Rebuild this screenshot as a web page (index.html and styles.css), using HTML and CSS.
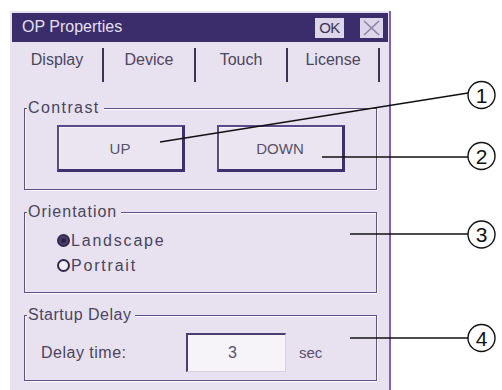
FILE: index.html
```html
<!DOCTYPE html>
<html>
<head>
<meta charset="utf-8">
<link rel="stylesheet" href="styles.css">
</head>
<body>
<div class="stage">
  <div class="window">
    <div class="titlebar">
      <span class="title">OP Properties</span>
      <span class="tb-ok">OK</span>
      <span class="tb-close"><svg width="19" height="16" viewBox="0 0 19 16"><path d="M2 1 L17 15 M17 1 L2 15" stroke="#8a84a0" stroke-width="1.6" fill="none"/></svg></span>
    </div>
    <div class="tabs">
      <div class="tab">Display</div>
      <div class="tab">Device</div>
      <div class="tab">Touch</div>
      <div class="tab">License</div>
    </div>
    <div class="group g-contrast">
      <div class="legend ls-contrast">Contrast</div>
      <div class="btnrow">
        <div class="btn">UP</div>
        <div class="btn">DOWN</div>
      </div>
    </div>
    <div class="group g-orient">
      <div class="legend ls-orient">Orientation</div>
      <div class="radios">
        <div class="radio"><span class="dot on"></span><span class="rlabel">Landscape</span></div>
        <div class="radio"><span class="dot"></span><span class="rlabel">Portrait</span></div>
      </div>
    </div>
    <div class="group g-delay">
      <div class="legend ls-delay">Startup Delay</div>
      <div class="delayrow">
        <span class="dlabel">Delay time:</span>
        <span class="input">3</span>
        <span class="unit">sec</span>
      </div>
    </div>
  </div>
  <svg class="callouts" width="502" height="390" viewBox="0 0 502 390">
    <g stroke="#111" stroke-width="1.5" fill="none">
      <line x1="160" y1="131" x2="468" y2="82"/>
      <line x1="322" y1="146" x2="468" y2="146"/>
      <line x1="350" y1="223" x2="468" y2="223"/>
      <line x1="350" y1="327" x2="468" y2="327"/>
    </g>
    <g stroke="#111" stroke-width="1.4" fill="#fff">
      <circle cx="481.5" cy="84" r="13.5"/>
      <circle cx="481.5" cy="145" r="13.5"/>
      <circle cx="481.5" cy="223.5" r="13.5"/>
      <circle cx="481.5" cy="327" r="13.5"/>
    </g>
    <g class="num" text-anchor="middle">
      <text x="481.5" y="91.5">1</text>
      <text x="481.5" y="152.5">2</text>
      <text x="481.5" y="231">3</text>
      <text x="481.5" y="334.5">4</text>
    </g>
  </svg>
</div>
</body>
</html>
```
FILE: styles.css
```css
html, body {
  margin: 0;
  padding: 0;
  background: #ffffff;
}
body {
  width: 502px;
  height: 390px;
  overflow: hidden;
  font-family: "Liberation Sans", Arial, sans-serif;
  font-size: 16px;
  color: #48455e;
}
.stage {
  position: relative;
  width: 502px;
  height: 390px;
}
.window {
  margin-left: 10px;
  margin-top: 11px;
  width: 381px;
  height: 390px;
  box-sizing: border-box;
  background: #e8e1f0;
  border-right: 2px solid #7b62b5;
  padding: 2px 0 0 2px;
}
.titlebar {
  height: 29px;
  margin-right: 1px;
  background: #3b2d6c;
  display: flex;
  align-items: center;
  padding: 0 5px 2px 10px;
  box-sizing: border-box;
}
.title {
  color: #e4e0f0;
  line-height: 18px;
  flex: 1;
}
.tb-ok {
  width: 29px;
  height: 20px;
  margin-top: 2px;
  background: #ddd6ea;
  color: #3a3358;
  font-size: 15px;
  line-height: 20px;
  text-align: center;
  letter-spacing: -0.5px;
}
.tb-close {
  width: 23px;
  height: 20px;
  margin-top: 2px;
  margin-left: 16px;
  background: #ddd6ea;
  display: flex;
  align-items: center;
  justify-content: center;
}
.tabs {
  display: flex;
  height: 40px;
}
.tab {
  width: 92px;
  margin-top: 6px;
  height: 34px;
  border-right: 2px solid #3a3358;
  padding-top: 3px;
  box-sizing: border-box;
  line-height: 18px;
  text-align: center;
  color: #4a475e;
}
.group {
  margin-left: 12px;
  width: 353px;
  box-sizing: border-box;
  border: 1px solid #5d5285;
  box-shadow: 1px 1px 0 #faf8fd, inset 1px 1px 0 #faf8fd;
}
.legend {
  width: fit-content;
  margin: -9px 0 0 2px;
  padding: 0 4px 0 1px;
  height: 16px;
  line-height: 16px;
  background: #e8e1f0;
}
.ls-contrast { letter-spacing: 1.4px; }
.ls-orient { letter-spacing: 1px; }
.ls-delay { letter-spacing: 0.5px; }
.g-contrast {
  margin-top: 26px;
  height: 82px;
}
.btnrow {
  display: flex;
  justify-content: center;
  gap: 32px;
  margin-top: 9px;
}
.btn {
  width: 128px;
  height: 47px;
  box-sizing: border-box;
  border: 2px solid #5a4a8c;
  border-right: 3px solid #3e3070;
  border-bottom: 3px solid #3e3070;
  box-shadow: inset 1px 1px 0 #f6f3fa;
  background: #ebe5f2;
  display: flex;
  align-items: center;
  justify-content: center;
  font-size: 15px;
  color: #55526a;
}
.g-orient {
  margin-top: 22px;
  height: 81px;
}
.radios {
  margin-top: 8px;
  padding-left: 32px;
}
.radio {
  height: 25px;
  display: flex;
  align-items: center;
}
.dot {
  width: 13px;
  height: 13px;
  box-sizing: border-box;
  border: 2px solid #2f2a4a;
  border-radius: 50%;
  background: #f2eef7;
  display: flex;
  align-items: center;
  justify-content: center;
}
.dot.on {
  background: #4a4070;
}
.dot.on::after {
  content: "";
  width: 5px;
  height: 5px;
  border-radius: 50%;
  background: #2a2444;
}
.rlabel {
  margin-left: 1px;
  letter-spacing: 1.8px;
  line-height: 18px;
}
.g-delay {
  margin-top: 22px;
  height: 66px;
}
.delayrow {
  display: flex;
  align-items: center;
  margin-top: 10px;
  padding-left: 16px;
}
.dlabel {
  width: 145px;
  letter-spacing: 0.5px;
}
.input {
  width: 100px;
  height: 39px;
  box-sizing: border-box;
  background: #f6f3f9;
  border-top: 2px solid #4a3f6e;
  border-left: 2px solid #4a3f6e;
  border-right: 1px solid #d8d0e4;
  border-bottom: 1px solid #d8d0e4;
  display: flex;
  align-items: center;
  justify-content: center;
  padding-right: 8px;
  color: #55526a;
}
.unit {
  margin-left: 13px;
  font-size: 15px;
  color: #55526a;
}
.callouts {
  position: absolute;
  left: 0;
  top: 0;
}
.num text {
  font-family: "Liberation Sans", Arial, sans-serif;
  font-size: 21px;
  fill: #111;
}
```
